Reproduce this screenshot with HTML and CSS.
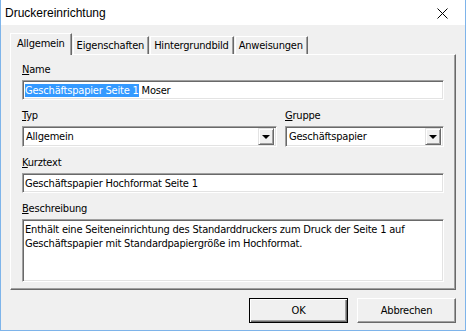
FILE: index.html
```html
<!DOCTYPE html>
<html lang="de">
<head>
    <meta charset="UTF-8">
    <title>Druckereinrichtung</title>
    <link rel="stylesheet" href="styles.css">
</head>
<body>
    <div class="fenster">
        <div class="titelleiste">
            <span class="titel">Druckereinrichtung</span>
            <svg class="schliessen" width="11" height="11" viewBox="0 0 11 11">
                <path d="M0.5 0.5 L10.5 10.5 M10.5 0.5 L0.5 10.5" stroke="#000" stroke-width="1" fill="none"/>
            </svg>
        </div>

        <div class="inhalt">
            <!-- Reiter -->
            <div class="reiter-leiste">
                <div class="reiter aktiv">Allgemein</div>
                <div class="reiter">Eigenschaften</div>
                <div class="reiter">Hintergrundbild</div>
                <div class="reiter">Anweisungen</div>
            </div>

            <div class="panel">
                <div class="feld">
                    <div class="beschriftung"><u>N</u>ame</div>
                    <div class="eingabe"><span class="markiert">Geschäftspapier Seite 1</span> Moser</div>
                </div>

                <div class="zeile">
                    <div class="feld typ">
                        <div class="beschriftung"><u>T</u>yp</div>
                        <div class="auswahl">
                            <span class="wert">Allgemein</span>
                            <span class="pfeil"><i></i></span>
                        </div>
                    </div>
                    <div class="feld gruppe">
                        <div class="beschriftung"><u>G</u>ruppe</div>
                        <div class="auswahl">
                            <span class="wert">Geschäftspapier</span>
                            <span class="pfeil"><i></i></span>
                        </div>
                    </div>
                </div>

                <div class="feld">
                    <div class="beschriftung"><u>K</u>urztext</div>
                    <div class="eingabe">Geschäftspapier Hochformat Seite 1</div>
                </div>

                <div class="feld">
                    <div class="beschriftung"><u>B</u>eschreibung</div>
                    <div class="eingabe textfeld">Enthält eine Seiteneinrichtung des Standarddruckers zum Druck der Seite 1 auf Geschäftspapier mit Standardpapiergröße im Hochformat.</div>
                </div>
            </div>

            <!-- Schaltflächen -->
            <div class="knopf-leiste">
                <div class="knopf standard">OK</div>
                <div class="knopf">Abbrechen</div>
            </div>
        </div>
    </div>
</body>
</html>
```

FILE: styles.css
```css
/* Seite */
body {
    margin: 0;
    background: #f0f0f0;
    font-family: "DejaVu Sans Condensed", "DejaVu Sans", sans-serif;
    font-size: 11px;
    letter-spacing: -0.2px;
    color: #000;
}

/* Fensterrahmen */
.fenster {
    width: 466px;
    height: 331px;
    box-sizing: border-box;
    border: 1px solid #7eb4ea;
    border-top: none;
    background: #f0f0f0;
}

.titelleiste {
    height: 25px;
    background: #fff;
    display: flex;
    align-items: center;
    justify-content: space-between;
    padding: 0 17px 0 4px;
}

.titel {
    font-family: "Liberation Sans", Arial, sans-serif;
    font-size: 12px;
    letter-spacing: 0;
    padding-top: 1px;
}

.schliessen {
    margin-top: 1px;
}

.inhalt {
    padding: 8px 9px 0 9px;
}

/* Reiter */
.reiter-leiste {
    display: flex;
    height: 21px;
    align-items: flex-end;
    position: relative;
    z-index: 1;
}

.reiter {
    height: 18px;
    box-sizing: border-box;
    padding: 2px 4px 0 3px;
    border-top: 1px solid #fff;
    border-left: 1px solid #fff;
    border-right: 1px solid #696969;
    box-shadow: inset -1px 0 #a0a0a0;
    margin-right: 1px;
    line-height: 14px;
}

.reiter.aktiv {
    height: 22px;
    padding: 3px 6px 0 6px;
    margin-bottom: -1px;
    background: #f0f0f0;
}

/* Registerfläche */
.panel {
    height: 236px;
    box-sizing: border-box;
    border-top: 1px solid #fff;
    border-left: 1px solid #fff;
    border-right: 1px solid #696969;
    border-bottom: 1px solid #696969;
    box-shadow: inset -1px -1px #a0a0a0;
    padding: 8px 11px 0 11px;
}

.feld {
    margin-bottom: 9px;
}

.beschriftung {
    line-height: 14px;
    margin-bottom: 3px;
}

/* Eingabefelder, versenkt */
.eingabe,
.auswahl {
    background: #fff;
    box-sizing: border-box;
    border-top: 1px solid #a0a0a0;
    border-left: 1px solid #a0a0a0;
    border-right: 1px solid #fff;
    border-bottom: 1px solid #fff;
    box-shadow: inset 1px 1px #696969, inset -1px -1px #e3e3e3;
    height: 20px;
    padding: 2px 3px 0 2px;
    line-height: 15px;
    white-space: nowrap;
}

.markiert {
    background: #3399ff;
    color: #fff;
}

.textfeld {
    height: 63px;
    white-space: normal;
    padding: 3px 4px 0 2px;
    line-height: 14px;
}

.zeile {
    display: flex;
    gap: 8px;
}

.typ {
    width: 255px;
}

.gruppe {
    flex: 1;
}

/* Auswahlliste */
.auswahl {
    height: 21px;
    display: flex;
    align-items: center;
    padding: 0 2px 0 3px;
}

.wert {
    flex: 1;
}

.pfeil {
    width: 16px;
    height: 17px;
    box-sizing: border-box;
    background: #f0f0f0;
    border-top: 1px solid #e3e3e3;
    border-left: 1px solid #e3e3e3;
    border-right: 1px solid #696969;
    border-bottom: 1px solid #696969;
    box-shadow: inset 1px 1px #fff, inset -1px -1px #a0a0a0;
    display: flex;
    align-items: center;
    justify-content: center;
}

.pfeil i {
    width: 0;
    height: 0;
    border-left: 4px solid transparent;
    border-right: 4px solid transparent;
    border-top: 4px solid #000;
    margin-top: 1px;
}

/* Schaltflächen */
.knopf-leiste {
    display: flex;
    justify-content: flex-end;
    gap: 9px;
    margin-top: 8px;
}

.knopf {
    width: 99px;
    height: 25px;
    box-sizing: border-box;
    border-top: 1px solid #fff;
    border-left: 1px solid #fff;
    border-right: 1px solid #696969;
    border-bottom: 1px solid #696969;
    box-shadow: inset -1px -1px #a0a0a0;
    display: flex;
    align-items: center;
    justify-content: center;
}

.knopf.standard {
    border: 1px solid #000;
    box-shadow: inset 1px 1px #fff, inset -1px -1px #696969, inset -2px -2px #a0a0a0;
}
```
